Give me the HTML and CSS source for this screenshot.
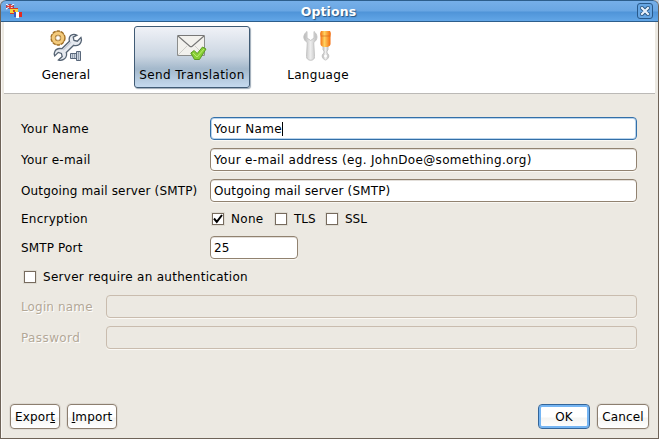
FILE: index.html
```html
<!DOCTYPE html>
<html lang="en">
<head>
<meta charset="utf-8">
<title>Options</title>
<link rel="stylesheet" href="styles.css">
</head>
<body>
<main class="window">
  <header class="titlebar">
    <svg class="app-icon" width="16" height="15" viewBox="0 0 16 15">
      <path fill="#304b9c" d="M0 0h8v5H0z"/><path d="M0 0l8 5M8 0L0 5" stroke="#fff" stroke-width="1.3"/><path d="M4 0v5M0 2.5h8" stroke="#e43c32" stroke-width="1.5"/>
      <path fill="#f5d53b" d="M4 4h8v6H4z"/><path fill="#d83a24" d="M4 4h8v1H4zM4 9h4v1H4zM7 6h2v2H7z"/>
      <path fill="#3b5bc0" d="M8 8h3v5H8z"/><path fill="#fff" d="M10 8h3v6h-3z"/><path fill="#e22c22" d="M13 8h3v5h-3z"/>
    </svg>
    <h1>Options</h1>
    <button class="close" aria-label="Close"><svg width="10" height="10" viewBox="0 0 10 10"><path d="M2 2l6 6M8 2L2 8" stroke="#285582" stroke-width="4" stroke-linecap="round"/><path d="M2 2l6 6M8 2L2 8" stroke="#e8f1fb" stroke-width="2.2" stroke-linecap="square"/></svg></button>
  </header>
  <nav class="tabs">
    <button class="tab general">
      <svg width="34" height="34" viewBox="0 0 34 34" fill="none">
        <circle cx="9" cy="9" r="6.4" stroke="#a16c20" stroke-width="2.5" stroke-dasharray="3 1.02"/>
        <circle cx="9" cy="9" r="4.7" stroke="#a97a30" stroke-width="4.4"/><circle cx="9" cy="9" r="4.7" stroke="#f4cb7c" stroke-width="3"/>
        <circle cx="9" cy="9" r="2.4" stroke="#a97a30" stroke-width=".7" fill="#fff"/>
        <path d="M28 6.200c-3-1.700-6.500-.7-7.500 2-.6 1.600-.4 3-.1 4l-7.600 7.500c-3-.6-6 .4-7.100 3-.7 1.500-.6 3 0 4.300l3.600-3.600 3.100 1 .8 3.200-3.700 3.400c3.600 1 7.500-1 8-4.500.2-1.200.1-2.100-.2-3l7.400-7.200c3 .7 6-.5 7.200-3.100.8-1.700.7-3.400.1-4.800l-3.700 3.800-3.300-.8-.8-3.200z" fill="#e5e9ef" stroke="#566474" stroke-width="1.300"/>
        <path d="M14 21l8-8" stroke="#c6ccd7" stroke-width="1.500"/>
        <path d="M21.500 24.500h6v5h-6zM27.500 22.500h4v9h-4z" fill="#ccd4df" stroke="#59677a"/><path d="M23.500 25v4m2-4v4m4-6v8" stroke="#7b899a" stroke-width=".7"/>
      </svg>
      <span>General</span>
    </button>
    <button class="tab send">
      <svg width="34" height="34" viewBox="0 0 34 34" fill="none">
        <path d="M2.500 6.500h27v20h-27z" fill="#f2f1ed" stroke="#8b8d8c"/>
        <path d="M3 26l9-9M29 26l-9-9" stroke="#cfceca"/><path d="M3 7l11.500 10c1 .9 2 .9 3 0L29 7" stroke="#777" stroke-width="1.100"/><path d="M3 6.500h26" stroke="#777"/>
        <path d="M15.800 24l3.400-2.500 3 3 5.300-6.500 3.500 2-6.500 10.500h-5z" fill="#88cf35" stroke="#5a9a24" stroke-linejoin="round"/><path d="M18 24l4 4 7-8" stroke="#b8ed6b"/>
      </svg>
      <span>Send Translation</span>
    </button>
    <button class="tab language">
      <svg width="34" height="34" viewBox="0 0 34 34" fill="none">
        <defs><linearGradient id="orange"><stop stop-color="#f36b0b"/><stop offset=".4" stop-color="#ffd261"/><stop offset="1" stop-color="#f36607"/></linearGradient>
        <linearGradient id="metal"><stop stop-color="#b5b5b5"/><stop offset=".5" stop-color="#eee"/><stop offset="1" stop-color="#bbb"/></linearGradient></defs>
        <path d="M6 2.500c-4 3-4.500 8 .3 11l-.8 14c0 5 8.500 5 8 0l-.8-14c4.500-3 4-8 .3-11v6.500l-3.300 2.500L6 9z" fill="url(#metal)" stroke="#c5c5c5"/>
        <path d="M22 17h5v4l-1 1v2c3 2 2 6-1.500 7-3.500-1-4.500-5-1.500-7v-2l-1-1z" fill="url(#metal)" stroke="#c4c4c4"/><circle cx="24.500" cy="27" r="1.500" fill="#fff"/>
        <path d="M20 2h9c1 2 1 3 .5 5v8c0 1.500-1.500 2.500-3 3h-4c-1.500-.5-3-1.500-3-3V7c-.5-2-.5-3 .5-5z" fill="url(#orange)"/><path d="M19.500 7h10" stroke="#d76c20" stroke-width=".7"/>
      </svg>
      <span>Language</span>
    </button>
  </nav>
  <form class="form">
    <div class="row"><label class="main-label name-text">Your Name</label><div class="field focus name-text">Your Name<i class="caret"></i></div></div>
    <div class="row"><label class="main-label e-mail">Your e-mail</label><div class="field address">Your e-mail address (eg. JohnDoe@something.org)</div></div>
    <div class="row"><label class="main-label">Outgoing mail server (SMTP)</label><div class="field">Outgoing mail server (SMTP)</div></div>
    <div class="row encryption"><span class="main-label">Encryption</span>
      <label class="option none"><span class="box"><svg width="10" height="10" viewBox="0 0 10 10" fill="none"><path d="M1 4.500l2.800 3.300L9 1" stroke="#000" stroke-width="2"/></svg></span>None</label>
      <label class="option tls"><span class="box"></span>TLS</label>
      <label class="option ssl"><span class="box"></span>SSL</label>
    </div>
    <div class="row port"><label class="main-label">SMTP Port</label><div class="field short">25</div></div>
    <div class="row auth"><label class="option"><span class="box"></span><span class="auth-text">Server require an authentication</span></label></div>
    <div class="row disabled"><label>Login name</label><div class="field"></div></div>
    <div class="row disabled"><label class="password">Password</label><div class="field"></div></div>
  </form>
  <footer class="actions">
    <button class="btn export"><span>Expor<u>t</u></span></button>
    <button class="btn import"><span><u>I</u>mport</span></button>
    <button class="btn ok"><span>OK</span></button>
    <button class="btn cancel"><span>Cancel</span></button>
  </footer>
</main>
</body>
</html>
```
FILE: styles.css
```css
* { box-sizing: border-box; }
body { margin: 0; background: #c5d3e2; font: 12px/16px "DejaVu Sans", sans-serif; letter-spacing: .15px; color: #000; }
button { font: inherit; letter-spacing: inherit; color: inherit; padding: 0; margin: 0; }
svg { display: block; }
.window { width: 659px; height: 439px; display: flex; flex-direction: column; background: #ece9e2; border: 1px solid #6e6358; border-top: 0; border-radius: 6px 6px 0 0; overflow: hidden; box-shadow: inset 1px 0 #faf8f5; }
.titlebar { height: 22px; margin: 0 -1px; flex: none; display: grid; grid-template-columns: 24px 1fr 24px; align-items: center; background: linear-gradient(#76afe9 0, #69a6e3 10px, #4f94d8 11px, #62a6e7 20px); border: 1px solid #2d5e8c; border-radius: 6px 6px 0 0; }
.app-icon { margin: 1px 0 0 5px; }
.titlebar h1 { margin: 0; padding: 2px 2px 0 0; text-align: center; font-size: 12.5px; line-height: 18px; letter-spacing: .1px; color: #fff; text-shadow: 1px 1px 1px #28547f; }
.close { width: 16px; height: 16px; margin-left: 3px; display: grid; place-items: center; border: 1px solid #28598a; border-radius: 3px; background: #65a5e3; }
.tabs { flex: none; display: flex; height: 72px; margin: 0 3px; background: #fff; border-bottom: 1px solid #bbb9b6; padding-top: 4px; }
.tab { height: 62px; border: 1px solid transparent; background: none; display: flex; flex-direction: column; align-items: center; padding-top: 2px; border-radius: 3px; white-space: nowrap; }
.tab span { margin-top: 4px; }
.general { width: 58px; margin-left: 33px; }
.send { width: 116px; margin-left: 39px; letter-spacing: .38px; background: linear-gradient(#f0f2f7 0, #cbd6e2 48%, #a3b8cb 70%, #c5daef 100%); border-color: #405b75; box-shadow: 1px 1px 1px #9daab7; }
.language { width: 70px; margin-left: 33px; letter-spacing: .3px; }
.form { flex: 1; padding: 23px 21px 0 20px; }
.row { display: flex; align-items: center; height: 23px; margin-bottom: 8px; }
.main-label { width: 189px; flex: none; white-space: nowrap; }
.field { flex: 1; height: 23px; padding: 1px 3px 0; line-height: 20px; background: #fff; border: 1px solid #918270; border-radius: 4px; box-shadow: 0 1px #faf8f3, inset 0 1px #e3dfda; white-space: nowrap; display: flex; align-items: center; }
.name-text { letter-spacing: .35px; }
.e-mail { letter-spacing: .25px; }
.address { letter-spacing: .32px; }
.focus { border-color: #336fa8; box-shadow: inset 0 0 0 1px #b9d4ec, 0 1px #faf8f3; }
.caret { width: 1px; height: 14px; background: #000; }
.encryption { height: 16px; margin: 9px 0; letter-spacing: 0; }
.encryption .main-label { letter-spacing: .25px; }
.option { display: flex; align-items: center; gap: 7px; }
.box { width: 12px; height: 12px; flex: none; background: #fff; border: 1px solid #776b5e; box-shadow: 0 0 0 1px #dedbd2; }
.encryption .box { margin-top: -1px; }
.none { width: 63px; margin-left: 2px; letter-spacing: .3px; }
.tls { width: 51px; }
.port { margin-bottom: 10px; letter-spacing: .15px; }
.port .short { flex: none; width: 88px; }
.auth { height: 16px; margin-bottom: 10px; padding-left: 3px; }
.auth-text { letter-spacing: .29px; }
.disabled { color: #b3a897; text-shadow: 1px 1px #fff; }
.disabled label { width: 85px; }
.disabled .password { letter-spacing: .4px; }
.disabled .field { background: transparent; border-color: #c9bcae; box-shadow: 0 1px #fbf9f5; }
.actions { display: flex; height: 34px; padding: 0 9px; flex: none; }
.btn { height: 25px; border: 1px solid #8c7e6f; border-radius: 4px; background: linear-gradient(#fff 0, #fff 12px, #f4f4f2 13px, #fff); box-shadow: 0 0 0 1px #dedad3; }
.export, .import { width: 50px; }
.import { margin-left: 7px; }
.ok { width: 52px; margin-left: auto; border-color: #336599; box-shadow: inset 0 0 0 2px #75b5f3; }
.cancel { width: 52px; margin-left: 7px; }
```
